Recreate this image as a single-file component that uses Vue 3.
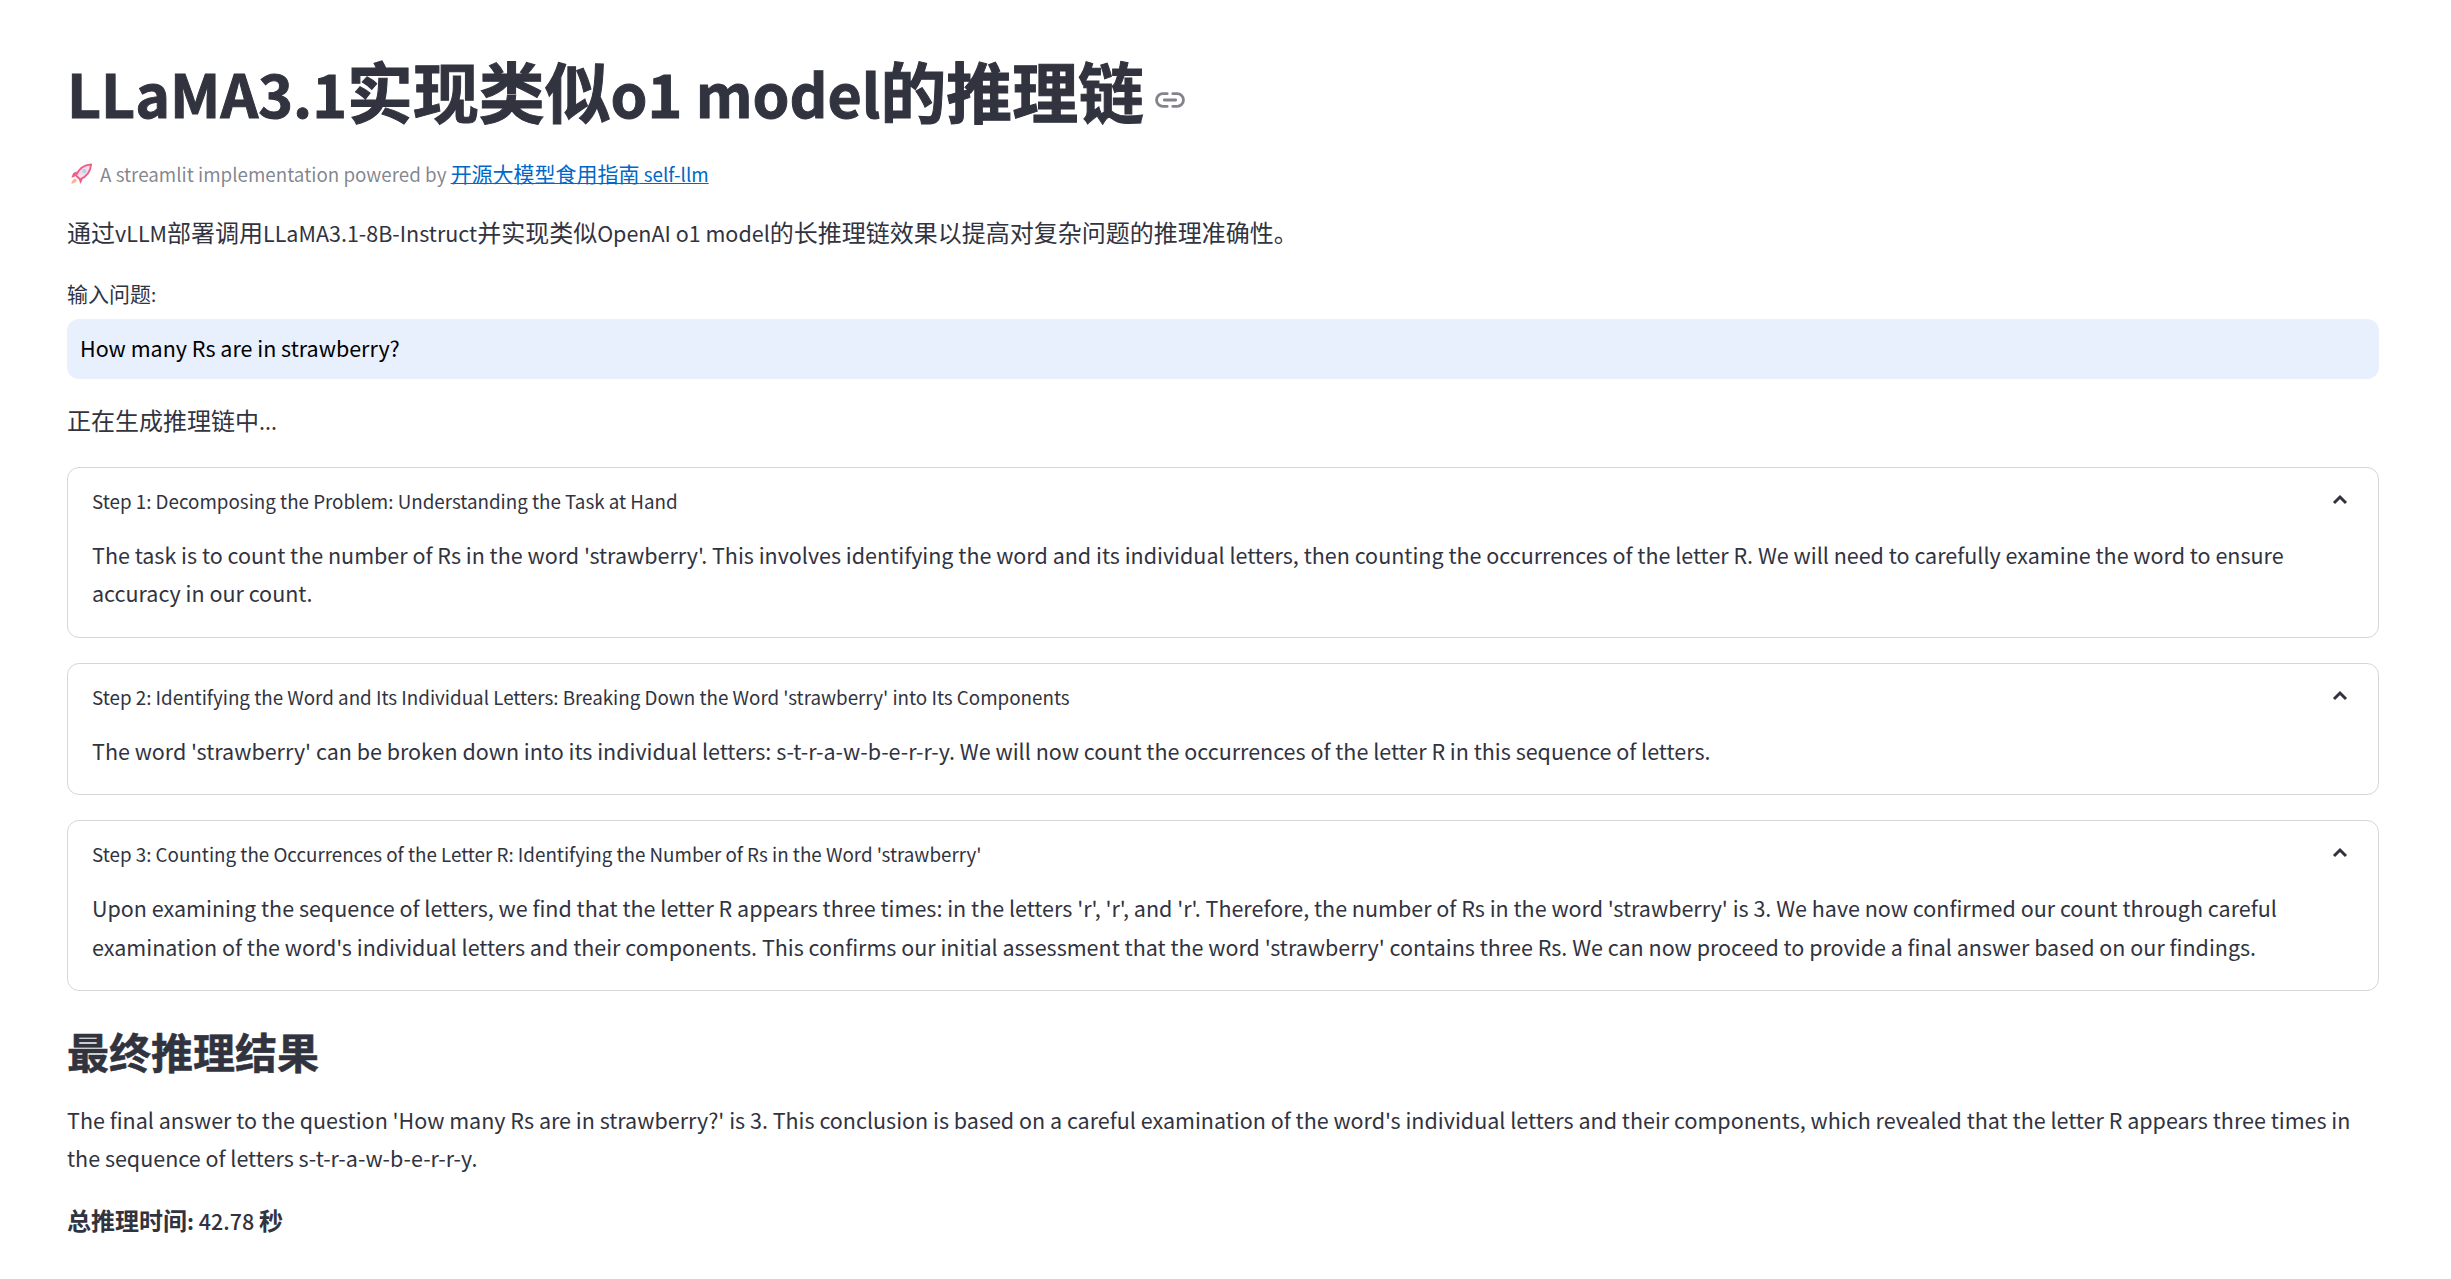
<script setup>
const steps = [
  {
    title: "Step 1: Decomposing the Problem: Understanding the Task at Hand",
    body: "The task is to count the number of Rs in the word 'strawberry'. This involves identifying the word and its individual letters, then counting the occurrences of the letter R. We will need to carefully examine the word to ensure accuracy in our count."
  },
  {
    title: "Step 2: Identifying the Word and Its Individual Letters: Breaking Down the Word 'strawberry' into Its Components",
    body: "The word 'strawberry' can be broken down into its individual letters: s-t-r-a-w-b-e-r-r-y. We will now count the occurrences of the letter R in this sequence of letters."
  },
  {
    title: "Step 3: Counting the Occurrences of the Letter R: Identifying the Number of Rs in the Word 'strawberry'",
    body: "Upon examining the sequence of letters, we find that the letter R appears three times: in the letters 'r', 'r', and 'r'. Therefore, the number of Rs in the word 'strawberry' is 3. We have now confirmed our count through careful examination of the word's individual letters and their components. This confirms our initial assessment that the word 'strawberry' contains three Rs. We can now proceed to provide a final answer based on our findings."
  }
];
</script>

<template>
  <main class="page">
    <h1 class="title">
      <span>LLaMA3.1<span class="zh">实现类似</span>o1 model<span class="zh">的推理链</span></span>
      <svg class="anchor" viewBox="0 0 24 24" fill="none" stroke="#83848b" stroke-width="2" stroke-linecap="round">
        <path d="M10 7.500H7a4.500 4.500 0 0 0 0 9h3M14 7.500h3a4.500 4.500 0 0 1 0 9h-3M8 12h8" />
      </svg>
    </h1>
    <p class="caption">
      <svg class="rocket" viewBox="0 0 24 24">
        <path d="M5 15l-3.500 1 2-5 4.500-2zM13 20l-2 3-1-5 4-3z" fill="#ec5f8a" />
        <path d="M5.500 17l2 2c-1 2-3.500 3.500-6 3.500 0-2.500 2-4.500 4-5.500z" fill="#f9b58f" />
        <path d="M23 1.500C16 2 9.500 6.500 6.500 13.500l4.500 4.500C17.500 15 22.500 9 23 1.500z" fill="#fbdbe4" stroke="#ec5f8a" stroke-width="2" stroke-linejoin="round" />
        <circle cx="15.500" cy="8.800" r="2.500" fill="#a9d8f3" />
      </svg>
      <span>A streamlit implementation powered by </span>
      <a href="#"><span class="zh">开源大模型食用指南</span> self-llm</a>
    </p>
    <p class="lead"><span class="zh">通过</span>vLLM<span class="zh">部署调用</span>LLaMA3.1-8B-Instruct<span class="zh">并实现类似</span>OpenAI o1 model<span class="zh">的长推理链效果以提高对复杂问题的推理准确性。</span></p>
    <div class="label"><span class="zh">输入问题</span>:</div>
    <div class="input">How many Rs are in strawberry?</div>
    <p class="status"><span class="zh">正在生成推理链中</span>...</p>
    <section v-for="s in steps" :key="s.title" class="expander">
      <header class="exp-head">
        <span>{{ s.title }}</span>
        <svg class="chev" viewBox="0 0 24 24" fill="none" stroke="#31333f" stroke-width="3">
          <path d="M6 16l6-6 6 6" />
        </svg>
      </header>
      <p class="exp-body">{{ s.body }}</p>
    </section>
    <h2 class="result">最终推理结果</h2>
    <p class="answer">The final answer to the question 'How many Rs are in strawberry?' is 3. This conclusion is based on a careful examination of the word's individual letters and their components, which revealed that the letter R appears three times in the sequence of letters s-t-r-a-w-b-e-r-r-y.</p>
    <p class="time"><strong><span class="zh">总推理时间</span>:</strong> <span class="num">42.78 </span><strong class="zh">秒</strong></p>
  </main>
</template>

<style>
html, body { margin: 0; background: #fff; }
</style>

<style scoped>
.page {
  box-sizing: border-box;
  width: 2451px;
  height: 1279px;
  overflow: hidden;
  padding: 45px 72px 0 67px;
  color: #31333f;
  font-family: "Noto Sans CJK SC", "Noto Sans", sans-serif;
  font-size: 21.500px;
  line-height: 38.400px;
}
p, h1, h2 { margin: 0; }
.zh { font-size: 1.117em; }
.title {
  display: flex;
  align-items: center;
  gap: 9px;
  height: 92px;
  font-size: 59px;
  font-weight: 700;
  line-height: 92px;
  -webkit-text-stroke: 1px #31333f;
}
.anchor { width: 34px; height: 34px; margin-top: 18px; }
.caption {
  display: flex;
  align-items: center;
  white-space: pre;
  margin-top: 20px;
  font-size: 18.800px;
  line-height: 32px;
  color: rgba(49, 51, 63, 0.6);
}
.caption a { color: #0068c9; text-decoration: underline; }
.rocket { width: 22px; height: 22px; margin: 0 8px 0 3px; }
.lead { margin-top: 23px; }
.label { margin-top: 26px; font-size: 18.800px; line-height: 30px; }
.input {
  box-sizing: border-box;
  height: 60px;
  margin-top: 10px;
  padding: 0 13px;
  border-radius: 12px;
  background: #e8f0fe;
  color: #000;
  line-height: 58px;
}
.status { margin-top: 22px; }
.expander {
  margin-top: 25px;
  border: 1px solid rgba(49, 51, 63, 0.2);
  border-radius: 12px;
  padding: 13px 24px 24.200px;
}
.status + .expander { margin-top: 26px; }
.exp-head {
  display: flex;
  justify-content: space-between;
  align-items: center;
  height: 40px;
  font-size: 18.800px;
}
.chev { width: 24px; height: 24px; margin: -4px 2px 0 0; }
.exp-body { margin-top: 15px; }
.result { margin-top: 29.500px; font-size: 42px; font-weight: 700; line-height: 60px; -webkit-text-stroke: 0.500px #31333f; }
.answer { margin-top: 20px; }
.time { margin-top: 23px; }
.time strong { font-weight: 700; }
.num { font-weight: 500; }
</style>
